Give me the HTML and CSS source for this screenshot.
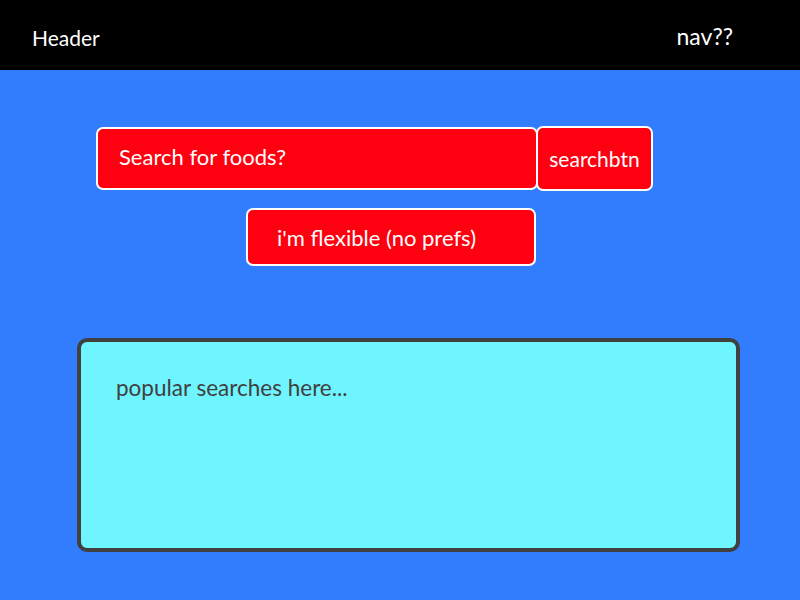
FILE: index.html
```html
<!DOCTYPE html>
<html>
<head>
<meta charset="utf-8">
<link rel="stylesheet" href="styles.css">
</head>
<body>
<header class="topbar">
  <span class="brand">Header</span>
  <span class="nav">nav??</span>
</header>
<main class="main">
  <div class="search-row">
    <div class="search-input">Search for foods?</div>
    <div class="search-btn">searchbtn</div>
  </div>
  <div class="flex-row">
    <div class="flex-btn">i'm flexible (no prefs)</div>
  </div>
  <section class="popular">popular searches here...</section>
</main>
</body>
</html>
```
FILE: styles.css
```css
html, body {
  margin: 0;
  padding: 0;
}
body {
  background: #317dfe;
  font-family: Lato, "Open Sans", sans-serif;
  height: 600px;
  overflow: hidden;
}
.topbar {
  height: 70px;
  background: #000;
  color: #fff;
  display: flex;
  justify-content: space-between;
  align-items: center;
  padding: 0 67px 0 32px;
  font-size: 21px;
  box-sizing: border-box;
}
.brand, .nav {
  line-height: 1;
  margin-top: 4px;
}
.nav {
  font-size: 23px;
  margin-top: 2px;
}
.main {
  display: flex;
  flex-direction: column;
  padding-top: 56px;
}
.search-row {
  display: flex;
  align-items: center;
  margin-left: 96px;
}
.search-input {
  width: 442px;
  height: 63px;
  box-sizing: border-box;
  background: #ff0010;
  border: 2px solid #fff;
  border-radius: 7px;
  color: #fff;
  font-size: 22px;
  padding: 0 0 5px 21px;
  display: flex;
  align-items: center;
}
.search-btn {
  width: 117px;
  height: 65px;
  margin-left: -2px;
  box-sizing: border-box;
  background: #ff0010;
  border: 2px solid #fff;
  border-radius: 7px;
  color: #fff;
  font-size: 21px;
  display: flex;
  align-items: center;
  justify-content: center;
}
.flex-row {
  display: flex;
  margin-left: 246px;
  margin-top: 17px;
}
.flex-btn {
  width: 290px;
  height: 58px;
  box-sizing: border-box;
  background: #ff0010;
  border: 2px solid #fff;
  border-radius: 7px;
  color: #fff;
  font-size: 22px;
  padding-left: 29px;
  display: flex;
  align-items: center;
}
.popular {
  margin: 72px 0 0 77px;
  width: 663px;
  height: 214px;
  box-sizing: border-box;
  background: #6ff5ff;
  border: 4px solid #404040;
  border-radius: 10px;
  color: #404040;
  font-size: 22.5px;
  line-height: 1.2;
  padding: 32px 0 0 35px;
}
```
